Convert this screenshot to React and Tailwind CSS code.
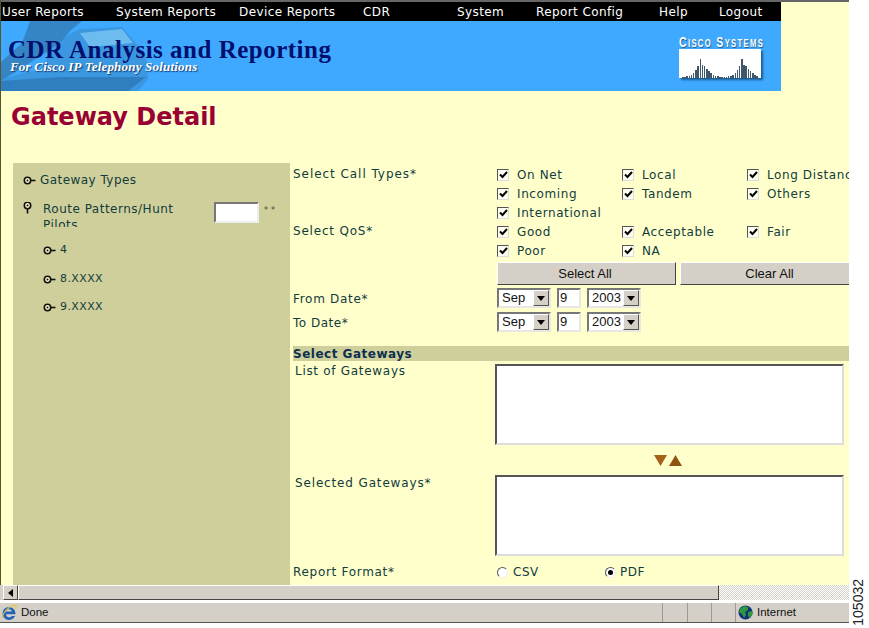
const sans = { fontFamily: '"DejaVu Sans", sans-serif' };

const menu = [
  ['User Reports', 'w-[116px] pl-[2px]'],
  ['System Reports', 'w-[123px]'],
  ['Device Reports', 'w-[124px]'],
  ['CDR', 'w-[94px]'],
  ['System', 'w-[79px]'],
  ['Report Config', 'w-[123px]'],
  ['Help', 'w-[60px]'],
  ['Logout', 'w-[60px]'],
];

const ciscoBars = [1, 1, 2, 2, 3, 5, 8, 12, 19, 13, 12, 9, 7, 5, 3, 2, 2, 1, 1, 1, 1, 2, 2, 3, 5, 8, 12, 19, 13, 12, 9, 7, 5, 3, 2];

function Key({ open, className }) {
  return (
    <svg width="13" height="13" viewBox="0 0 13 13" className={className}>
      <g transform={open ? 'rotate(90 6.5 6.5)' : undefined}>
        <circle cx="4.5" cy="6.5" r="3.2" fill="#fff8c8" stroke="#111" strokeWidth="1.6" />
        <circle cx="4.5" cy="6.5" r="1" fill="#111" />
        <path d="M8 6.5h4.5" stroke="#111" strokeWidth="1.6" />
      </g>
    </svg>
  );
}

function Check({ label }) {
  return (
    <div className="flex items-center h-[19px] whitespace-nowrap">
      <span className="w-[12px] h-[12px] bg-[#fdfdf0] border border-t-[#555] border-l-[#555] border-r-[#ddd] border-b-[#ddd] flex items-center justify-center">
        <svg width="9" height="8" viewBox="0 0 9 8">
          <path d="M1 3.500l2.500 2.500 4.500-5" fill="none" stroke="#000" strokeWidth="2" />
        </svg>
      </span>
      <span className="ml-[8px] tracking-[0.6px]">{label}</span>
    </div>
  );
}

function Select({ value, width }) {
  return (
    <div
      className={`${width} h-[20px] bg-white border-2 border-t-[#777] border-l-[#777] border-r-[#e8e8e0] border-b-[#e8e8e0] flex items-center justify-between pl-[3px] font-['Liberation_Sans'] text-[13px] text-[#111]`}
    >
      <span>{value}</span>
      <span className="w-[16px] h-[16px] bg-[#d4d0c8] border border-t-white border-l-white border-r-[#555] border-b-[#555] flex items-center justify-center">
        <svg width="8" height="5" viewBox="0 0 8 5"><path d="M0 0h8L4 5z" fill="#000" /></svg>
      </span>
    </div>
  );
}

function DateRow({ label, className, labelClass }) {
  return (
    <div className={`flex items-center h-[20px] ${className}`}>
      <div className={`w-[204px] ${labelClass}`}>{label}</div>
      <Select value="Sep" width="w-[54px]" />
      <div className="w-[24px] h-[20px] mx-[6px] bg-white border-2 border-t-[#777] border-l-[#777] border-r-[#e8e8e0] border-b-[#e8e8e0] pl-[1px] text-[13px] leading-[16px] text-[#111] font-['Liberation_Sans']">9</div>
      <Select value="2003" width="w-[54px]" />
    </div>
  );
}

function ListBox() {
  return <div className="ml-[200px] w-[349px] h-[81px] bg-white border-2 border-t-[#555] border-l-[#555] border-r-[#ddd] border-b-[#ddd]" />;
}

function Radio({ checked }) {
  return (
    <span className="w-[11px] h-[11px] rounded-full bg-white border border-t-[#555] border-l-[#555] border-r-[#eee] border-b-[#eee] flex items-center justify-center">
      {checked && <span className="w-[5px] h-[5px] rounded-full bg-black" />}
    </span>
  );
}

function Sidebar() {
  return (
    <div className="w-[277px] ml-[12px] h-[422px] bg-[#cfcf9b] text-[#123c3c] text-[12px] shrink-0 pt-[10px]">
      <div className="flex items-center h-[14px] pl-[10px] gap-[4px]">
        <Key />
        <span className="tracking-[0.45px]">Gateway Types</span>
      </div>
      <div className="flex items-start mt-[15px] pl-[8px] h-[25px] overflow-hidden">
        <Key open className="-mt-[1px]" />
        <div className="w-[150px] ml-[9px] -mt-[1px] leading-[16px] tracking-[0.5px]">Route Patterns/Hunt Pilots</div>
        <div className="w-[45px] h-[21px] ml-[21px] bg-white border-2 border-t-[#777] border-l-[#777] border-r-[#eee] border-b-[#eee]" />
        <span className="ml-[5px] pt-[2px] text-[8px] leading-[14px] tracking-[3px] text-[#444]">**</span>
      </div>
      <div className="pl-[30px] mt-[16px] flex flex-col gap-[15px]">
        {['4', '8.XXXX'].map((item) => (
          <div key={item} className="flex items-center h-[14px] gap-[4px]">
            <Key />
            <span className="text-[11px] tracking-[0.4px]">{item}</span>
          </div>
        ))}
        <div className="flex items-center h-[14px] gap-[4px] -mt-[1px]">
          <Key />
          <span className="text-[11px] tracking-[0.4px]">9.XXXX</span>
        </div>
      </div>
    </div>
  );
}

function Form() {
  return (
    <div className="flex-1 min-w-0 overflow-hidden h-[422px] pl-[3px] pt-[2px] text-[12px] text-[#123c3c]">
      <div className="grid grid-cols-[204px_125px_125px_125px] w-[579px]">
        <div className="h-[19px] tracking-[0.95px]">Select Call Types*</div>
        <Check label="On Net" />
        <Check label="Local" />
        <Check label="Long Distance" />
        <div />
        <Check label="Incoming" />
        <Check label="Tandem" />
        <Check label="Others" />
        <div />
        <Check label="International" />
        <div />
        <div />
        <div className="h-[19px] tracking-[0.8px]">Select QoS*</div>
        <Check label="Good" />
        <Check label="Acceptable" />
        <Check label="Fair" />
        <div />
        <Check label="Poor" />
        <Check label="NA" />
        <div />
      </div>
      <div className="flex mt-[2px] ml-[204px] gap-[4px] w-[365px] h-[23px] font-['Liberation_Sans'] text-[13px] text-[#111]">
        <button className="w-[179px] pr-[3px] shrink-0 bg-[#d4d0c8] border border-t-white border-l-white border-r-[#444] border-b-[#444]">Select All</button>
        <button className="w-[179px] shrink-0 bg-[#d4d0c8] border border-t-white border-l-white border-r-[#444] border-b-[#444]">Clear All</button>
      </div>
      <DateRow label="From Date*" className="mt-[3px]" labelClass="pt-[2px] tracking-[0.7px]" />
      <DateRow label="To Date*" className="mt-[4px]" labelClass="pt-[1px] tracking-[0.5px]" />
      <div className="mt-[14px] h-[15px] bg-[#cfcf9b] font-bold text-[#0d2f4f] leading-[17px] tracking-[0.5px]">Select Gateways</div>
      <div className="flex mt-[3px]">
        <div className="w-0 whitespace-nowrap ml-[2px] -mt-[2px] tracking-[0.7px]">List of Gateways</div>
        <ListBox />
      </div>
      <div className="h-[30px] flex items-center justify-center gap-[2px] pl-[194px]">
        <svg width="13" height="11" viewBox="0 0 13 11"><path d="M0 0h13L6.5 11z" fill="#a5611a" /></svg>
        <svg width="13" height="11" viewBox="0 0 13 11"><path d="M6.5 0L13 11H0z" fill="#8f5414" /></svg>
      </div>
      <div className="flex">
        <div className="w-0 whitespace-nowrap ml-[2px] -mt-[1px] tracking-[0.85px]">Selected Gateways*</div>
        <ListBox />
      </div>
      <div className="flex items-center h-[14px] mt-[9px]">
        <div className="w-[204px] tracking-[0.7px]">Report Format*</div>
        <Radio />
        <span className="ml-[5px] w-[92px] tracking-[0.5px]">CSV</span>
        <Radio checked />
        <span className="ml-[4px] tracking-[0.5px]">PDF</span>
      </div>
    </div>
  );
}

function Banner() {
  return (
    <div className="relative w-[781px] h-[70px] bg-[#3fa9ff] overflow-hidden flex justify-between">
      <svg width="150" height="70" viewBox="0 0 150 70" className="absolute left-0 top-0">
        <path d="M60 18L80 8 122 6 146 34 148 58 138 70H0V58L40 48z" fill="#3b97e0" />
        <path d="M80 12L122 8 133 22 90 26z" fill="#6cbcf0" />
        <path d="M30 0H82L70 10 60 22 45 32 14 52 0 60V42L22 22z" fill="#3585c6" />
        <path d="M0 60L60 56H146L128 70H0z" fill="#2f7fc0" />
      </svg>
      <div className="relative pl-[8px] pt-[17px]">
        <div className="font-['Liberation_Serif'] font-bold text-[25px] leading-[24px] text-[#000f6e] tracking-[0.5px] whitespace-nowrap">CDR Analysis and Reporting</div>
        <div className="font-['Liberation_Serif'] font-bold italic text-[13px] leading-[10px] text-white pl-[2px] tracking-[0.2px] whitespace-nowrap [text-shadow:1px_1px_1px_#103a70]">For Cisco IP Telephony Solutions</div>
      </div>
      <div className="relative w-[84px] mr-[18px] mt-[14px]">
        <div className="font-['Liberation_Sans'] font-bold text-[15px] leading-[14px] text-white tracking-[1.9px] whitespace-nowrap scale-x-[0.7] origin-left [font-variant:small-caps] [text-shadow:1px_1px_1px_#1d5b8f]">Cisco Systems</div>
        <div className="w-[82px] h-[29px] bg-white shadow-[2px_2px_2px_#1d5b8f] flex items-end pl-[3px] gap-[0.7px]">
          {ciscoBars.map((h, i) => (
            <span key={i} className="w-[1.5px] bg-[#3f566b]" style={{ height: h + 'px' }} />
          ))}
        </div>
      </div>
    </div>
  );
}

function StatusBar() {
  return (
    <div className="h-[21px] mt-[2px] border-t border-b border-t-white border-b-[#555] bg-[#d4d0c8] flex items-center font-['Liberation_Sans'] text-[11.5px] text-[#111]">
      <svg width="16" height="17" viewBox="0 0 16 17" className="ml-[1px] mr-[4px]">
        <path d="M8 3a6.500 6.500 0 1 0 6 9H10.800a3.200 3.200 0 0 1-5.800-1.800h9.500V9.500A6.500 6.500 0 0 0 8 3zM5.100 7.500a3 3 0 0 1 5.800 0z" fill="#1f62b8" />
        <path d="M1 14C2 8 8 2 14 1c1.500 0 1.500 2 .5 4" fill="none" stroke="#e9c24a" strokeWidth="1.200" />
      </svg>
      <span>Done</span>
      <div className="flex-1" />
      <div className="w-[25px] h-[19px] border-l border-[#999]" />
      <div className="w-[24px] h-[19px] border-l border-[#999]" />
      <div className="w-[24px] h-[19px] border-l border-[#999]" />
      <div className="w-[114px] h-[19px] border-l border-[#999] flex items-center pl-[2px] gap-[4px]">
        <svg width="15" height="15" viewBox="0 0 15 15">
          <circle cx="7.500" cy="7.500" r="7" fill="#12307e" />
          <path d="M2 4l4-3 4 1 0 3-3 2 1 3-2 3-2-4-3-2zM10 7l4-1 1 3-4 4-1-3z" fill="#2e9a3a" />
        </svg>
        <span>Internet</span>
      </div>
    </div>
  );
}

export default function App() {
  return (
    <div className="w-[869px] h-[628px] bg-white overflow-hidden flex" style={sans}>
      <div className="w-[849px] h-full flex flex-col shrink-0">
        <div className="h-[585px] bg-[#ffffcc] border-l border-[#55552a] overflow-hidden">
          <div className="h-[2px] -ml-[1px] bg-[#666]" />
          <div className="w-[781px] h-[19px] bg-black text-white text-[12px] leading-[21px] tracking-[0.4px] flex whitespace-nowrap -ml-[1px]">
            {menu.map(([label, w]) => (
              <div key={label} className={w}>{label}</div>
            ))}
          </div>
          <div className="-ml-[1px]">
            <Banner />
          </div>
          <div className="h-[72px] pl-[10px] pt-[11px] text-[24px] leading-[30px] font-bold text-[#990033]">Gateway Detail</div>
          <div className="flex">
            <Sidebar />
            <Form />
          </div>
        </div>
        <div className="h-[15px] bg-[#d4d0c8] flex shrink-0">
          <div className="w-[3px]" />
          <div className="w-[15px] h-[15px] border border-t-white border-l-white border-r-[#444] border-b-[#444] flex items-center justify-center">
            <svg width="5" height="8" viewBox="0 0 5 8"><path d="M5 0v8L0 4z" fill="#000" /></svg>
          </div>
          <div className="w-[701px] border border-t-white border-l-white border-r-[#444] border-b-[#444]" />
          <div className="flex-1 bg-[repeating-conic-gradient(#d4d0c8_0_25%,#ffffff_0_50%)] bg-[length:2px_2px]" />
        </div>
        <StatusBar />
      </div>
      <div className="flex-1 flex flex-col items-start justify-end pb-[2px] pl-[2px]">
        <div className="[writing-mode:vertical-rl] rotate-180 font-['Liberation_Sans'] text-[14px] leading-[14px] text-[#222]">105032</div>
      </div>
    </div>
  );
}
